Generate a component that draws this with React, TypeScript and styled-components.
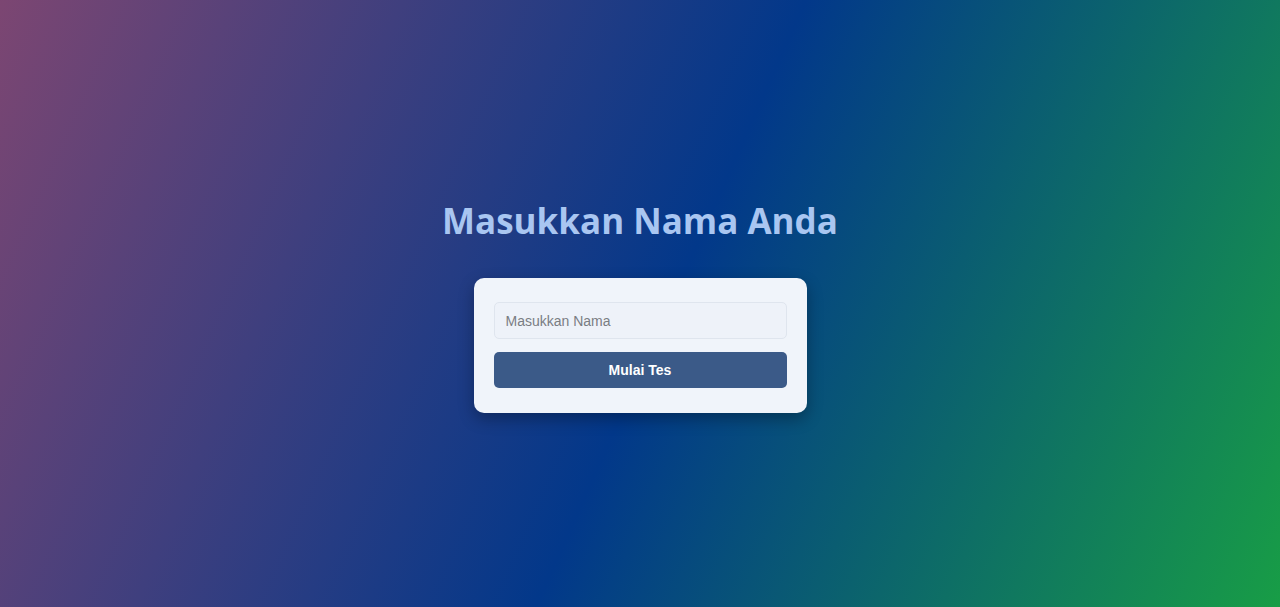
import React from "react";
import styled, { createGlobalStyle } from "styled-components";

const GlobalStyle = createGlobalStyle`
  html, body { margin: 0; padding: 0; }
  body {
    font-family: "Liberation Sans", Arial, sans-serif;
  }
`;

const Page = styled.main`
  min-height: 100vh;
  display: flex;
  flex-direction: column;
  align-items: center;
  justify-content: center;
  background: linear-gradient(114deg, #7c4672 0%, #02388a 52%, #189d46 100%);
  box-sizing: border-box;
  padding-top: 4px;
`;

const Title = styled.h1`
  margin: 0 0 34px;
  font-family: "Open Sans", "Noto Sans", sans-serif;
  font-weight: 700;
  font-size: 35px;
  line-height: 46px;
  color: #a9c6f1;
  letter-spacing: 0;
`;

const Card = styled.div`
  width: 333px;
  box-sizing: border-box;
  padding: 24px 20px 25px;
  background: #f0f4fa;
  border-radius: 10px;
  box-shadow: 0 6px 16px rgba(0, 0, 0, 0.3);
  display: flex;
  flex-direction: column;
  gap: 13px;
`;

const Input = styled.input`
  height: 37px;
  box-sizing: border-box;
  padding: 0 11px;
  border: 1px solid #dfe5ee;
  border-radius: 5px;
  background: #eef2f9;
  font-family: "Liberation Sans", Arial, sans-serif;
  font-size: 14px;
  color: #333;
  outline: none;
  &::placeholder { color: #7a7d83; }
`;

const Button = styled.button`
  height: 36px;
  border: none;
  border-radius: 5px;
  background: #3b5a88;
  color: #ffffff;
  font-family: "Liberation Sans", Arial, sans-serif;
  font-weight: 700;
  font-size: 14px;
  cursor: pointer;
`;

export default function App() {
  return (
    <>
      <GlobalStyle />
      <Page>
        <Title>Masukkan Nama Anda</Title>
        <Card>
          <Input placeholder="Masukkan Nama" />
          <Button>Mulai Tes</Button>
        </Card>
      </Page>
    </>
  );
}
